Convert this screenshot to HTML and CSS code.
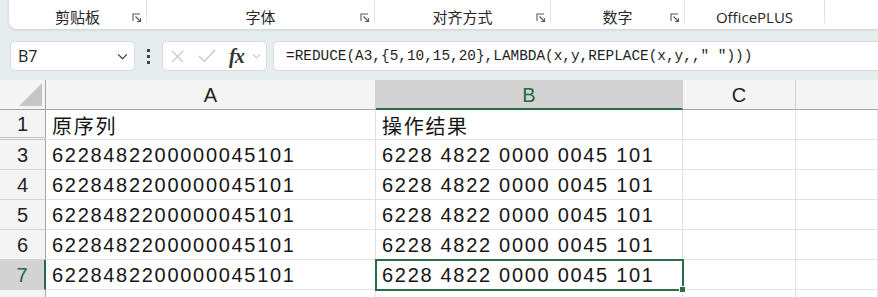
FILE: index.html
```html
<!DOCTYPE html>
<html lang="zh-CN">
<head>
    <meta charset="UTF-8">
    <meta name="viewport" content="width=device-width, initial-scale=1.0">
    <title>REDUCE + REPLACE</title>
    <link rel="stylesheet" href="styles.css">
</head>
<body>
    <div class="ribbon">
        <div class="group g-clip">
            <span class="group-label">剪贴板</span>
            <svg class="launcher" viewBox="0 0 10 10"><path d="M1 8V1h7M3.5 3.5l5 5M8.5 5.2v3.3H5.2"/></svg>
        </div>
        <div class="group g-font">
            <span class="group-label">字体</span>
            <svg class="launcher" viewBox="0 0 10 10"><path d="M1 8V1h7M3.5 3.5l5 5M8.5 5.2v3.3H5.2"/></svg>
        </div>
        <div class="group g-align">
            <span class="group-label">对齐方式</span>
            <svg class="launcher" viewBox="0 0 10 10"><path d="M1 8V1h7M3.5 3.5l5 5M8.5 5.2v3.3H5.2"/></svg>
        </div>
        <div class="group g-num">
            <span class="group-label">数字</span>
            <svg class="launcher" viewBox="0 0 10 10"><path d="M1 8V1h7M3.5 3.5l5 5M8.5 5.2v3.3H5.2"/></svg>
        </div>
        <div class="group g-plus">
            <span class="group-label">OfficePLUS</span>
        </div>
    </div>

    <div class="formula-bar">
        <div class="name-box">
            <span>B7</span>
            <svg class="chev" viewBox="0 0 12 8"><path d="M1 1.5l5 5 5-5"/></svg>
        </div>
        <div class="dots"><i></i><i></i><i></i></div>
        <div class="fx-box">
            <svg class="ico-x" viewBox="0 0 14 14"><path d="M1 1l12 12M13 1L1 13"/></svg>
            <svg class="ico-ok" viewBox="0 0 18 14"><path d="M1 7l5.5 5.5L17 1"/></svg>
            <span class="fx">fx</span>
            <svg class="chev-sm" viewBox="0 0 10 6"><path d="M1 1l4 4 4-4"/></svg>
        </div>
        <div class="formula">=REDUCE(A3,{5,10,15,20},LAMBDA(x,y,REPLACE(x,y,," ")))</div>
    </div>

    <div class="sheet">
        <div class="hd corner"><svg viewBox="0 0 23 23"><polygon points="23,0 23,23 0,23"/></svg></div>
        <div class="hd col">A</div>
        <div class="hd col sel">B</div>
        <div class="hd col">C</div>
        <div class="hd col last"></div>

        <div class="hd row hidden-after">1</div>
        <div class="cell">原序列</div>
        <div class="cell">操作结果</div>
        <div class="cell"></div>
        <div class="cell"></div>

        <div class="hd row">3</div>
        <div class="cell">6228482200000045101</div>
        <div class="cell">6228 4822 0000 0045 101</div>
        <div class="cell"></div>
        <div class="cell"></div>

        <div class="hd row">4</div>
        <div class="cell">6228482200000045101</div>
        <div class="cell">6228 4822 0000 0045 101</div>
        <div class="cell"></div>
        <div class="cell"></div>

        <div class="hd row">5</div>
        <div class="cell">6228482200000045101</div>
        <div class="cell">6228 4822 0000 0045 101</div>
        <div class="cell"></div>
        <div class="cell"></div>

        <div class="hd row">6</div>
        <div class="cell">6228482200000045101</div>
        <div class="cell">6228 4822 0000 0045 101</div>
        <div class="cell"></div>
        <div class="cell"></div>

        <div class="hd row sel">7</div>
        <div class="cell">6228482200000045101</div>
        <div class="cell active">6228 4822 0000 0045 101<span class="handle"></span></div>
        <div class="cell"></div>
        <div class="cell"></div>

        <div class="hd row"></div>
        <div class="cell"></div>
        <div class="cell"></div>
        <div class="cell"></div>
        <div class="cell"></div>
    </div>
</body>
</html>
```

FILE: styles.css
```css
* {
    box-sizing: border-box;
}
body {
    margin: 0;
    width: 878px;
    height: 297px;
    overflow: hidden;
    background-color: #e6edef;
    font-family: "Liberation Sans", "Noto Sans CJK SC", sans-serif;
    color: #1b1b1b;
}

/* ribbon group labels */
.ribbon {
    display: flex;
    margin-left: 9px;
    height: 29px;
    background-color: #fff;
    border-bottom-left-radius: 8px;
    box-shadow: 0 1px 3px rgba(0, 0, 0, 0.12);
}
.group {
    position: relative;
    height: 23px;
    display: flex;
    align-items: flex-end;
    justify-content: center;
    border-right: 1px solid #e2e2e2;
}
.g-clip { width: 138px; }
.g-font { width: 228px; }
.g-align { width: 176px; }
.g-num { width: 134px; }
.g-plus { width: 140px; }
.group-label {
    font-family: "Noto Sans CJK SC", "Open Sans", sans-serif;
    font-size: 15px;
    line-height: 18px;
    color: #262626;
    margin-bottom: -3px;
}
.g-plus .group-label {
    font-family: "Open Sans", "Noto Sans CJK SC", sans-serif;
    font-size: 15px;
}
.launcher {
    position: absolute;
    right: 4px;
    top: 13px;
    width: 10px;
    height: 10px;
    fill: none;
    stroke: #555;
    stroke-width: 1.1;
}

/* formula bar */
.formula-bar {
    display: flex;
    align-items: center;
    height: 30px;
    margin-top: 12px;
    padding-left: 10px;
}
.name-box, .fx-box, .formula {
    height: 30px;
    background-color: #fff;
    border: 1px solid #dadada;
    border-radius: 5px;
    display: flex;
    align-items: center;
}
.name-box {
    width: 125px;
    padding: 0 6px 0 7px;
    justify-content: space-between;
    font-family: "Open Sans", sans-serif;
    font-size: 16px;
    color: #222;
}
.chev {
    width: 11px;
    height: 7px;
    fill: none;
    stroke: #333;
    stroke-width: 1.3;
}
.dots {
    width: 27px;
    display: flex;
    flex-direction: column;
    align-items: center;
    gap: 3px;
}
.dots i {
    display: block;
    width: 3px;
    height: 3px;
    background-color: #444;
}
.fx-box {
    width: 105px;
    padding-left: 8px;
}
.ico-x {
    width: 13px;
    height: 13px;
    fill: none;
    stroke: #c4c4c4;
    stroke-width: 1.2;
}
.ico-ok {
    width: 18px;
    height: 14px;
    margin-left: 14px;
    fill: none;
    stroke: #c4c4c4;
    stroke-width: 1.2;
}
.fx {
    margin-left: 13px;
    font-family: "Liberation Serif", serif;
    font-style: italic;
    font-weight: bold;
    font-size: 20px;
    color: #333;
    letter-spacing: -1px;
}
.chev-sm {
    width: 9px;
    height: 6px;
    margin-left: 8px;
    fill: none;
    stroke: #aaa;
    stroke-width: 1.1;
}
.formula {
    flex: 1;
    margin-left: 6px;
    margin-right: -10px;
    padding-left: 12px;
    font-family: "Liberation Mono", "DejaVu Sans Mono", monospace;
    font-size: 14.4px;
    color: #1e1e1e;
    white-space: pre;
}

/* sheet grid */
.sheet {
    margin-top: 9px;
    display: grid;
    grid-template-columns: 46px 330px 307px 113px 1fr;
    grid-auto-rows: 30px;
    background-color: #fff;
}
.hd {
    background-color: #f4f4f4;
    display: flex;
    align-items: center;
    justify-content: center;
    font-size: 20px;
    color: #222;
}
.hd.col {
    border-right: 1px solid #d0d0d0;
    border-bottom: 1px solid #a5a5a5;
    padding-top: 2px;
}
.hd.col.last {
    border-right: none;
}
.hd.corner {
    border-right: 1px solid #a5a5a5;
    border-bottom: 1px solid #a5a5a5;
    justify-content: flex-end;
    align-items: flex-end;
    padding: 0 3px 3px 0;
}
.corner svg {
    width: 23px;
    height: 23px;
    fill: #c6c6c6;
}
.hd.row {
    border-right: 1px solid #a5a5a5;
    border-bottom: 1px solid #d4d4d4;
    padding-top: 2px;
}
.hd.row.hidden-after {
    border-bottom: 3px double #c4c4c4;
}
.hd.sel {
    background-color: #d3d3d3;
    color: #22693f;
}
.hd.col.sel {
    border-bottom: 2px solid #2a6e47;
}
.hd.row.sel {
    border-right: 2px solid #2a6e47;
}
.cell {
    border-right: 1px solid #e1e1e1;
    border-bottom: 1px solid #e1e1e1;
    display: flex;
    align-items: center;
    padding: 2px 0 0 6px;
    font-size: 20px;
    letter-spacing: 1.7px;
    white-space: nowrap;
    color: #151515;
}
.cell.active {
    position: relative;
    outline: 2px solid #2a6e47;
    outline-offset: -1px;
}
.handle {
    position: absolute;
    right: -4px;
    bottom: -4px;
    width: 7px;
    height: 7px;
    background-color: #2a6e47;
    border: 1px solid #fff;
}
```
